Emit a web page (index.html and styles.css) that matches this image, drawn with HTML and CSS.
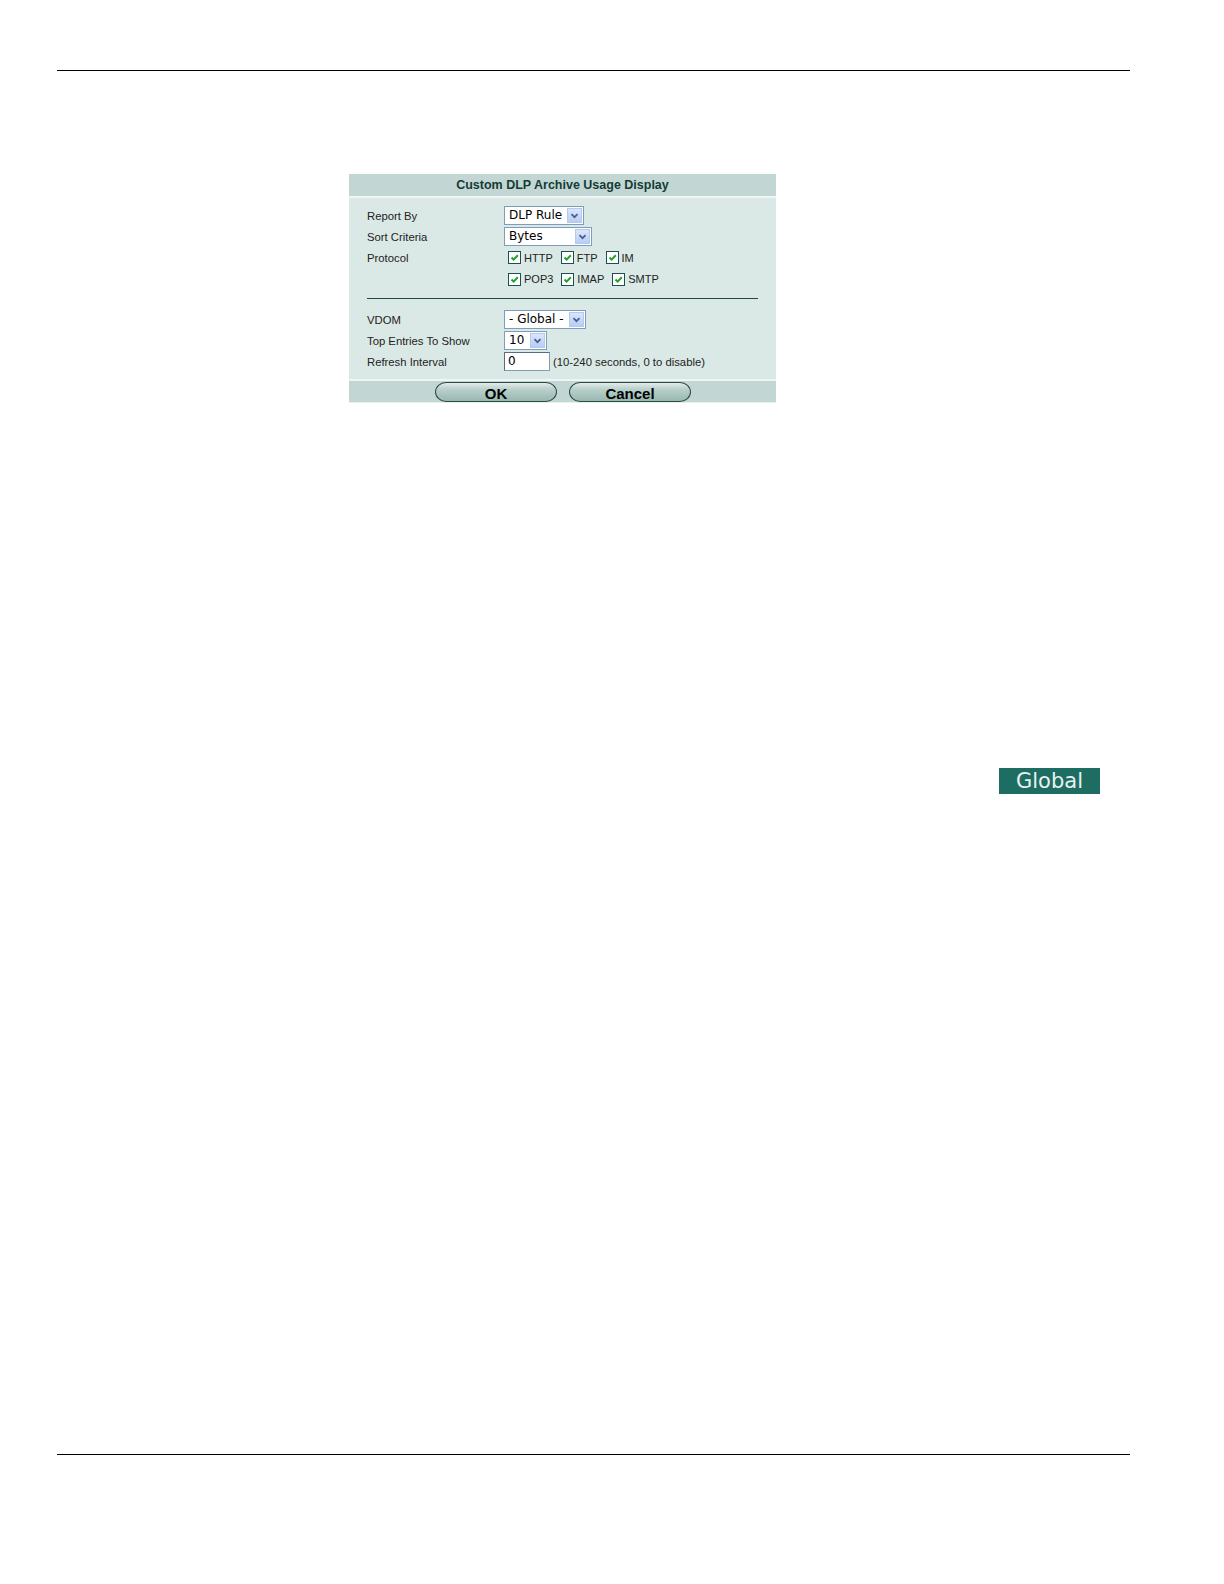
FILE: index.html
```html
<!DOCTYPE html>
<html>
<head>
<meta charset="utf-8">
<title>Custom DLP Archive Usage Display</title>
<link rel="stylesheet" href="styles.css">
</head>
<body>
<div class="page">
  <div class="rule rule-top"></div>

  <div class="dialog">
    <div class="dlg-head">Custom DLP Archive Usage Display</div>
    <div class="dlg-body">
      <div class="row">
        <span class="label">Report By</span>
        <span class="select w78"><span class="sel-text">DLP Rule</span><span class="arrow"><svg viewBox="0 0 15 15" width="15" height="15"><path d="M4 6 L7.5 9.5 L11 6" fill="none" stroke="#4a5f8a" stroke-width="2"/></svg></span></span>
      </div>
      <div class="row">
        <span class="label">Sort Criteria</span>
        <span class="select w86"><span class="sel-text">Bytes</span><span class="arrow"><svg viewBox="0 0 15 15" width="15" height="15"><path d="M4 6 L7.5 9.5 L11 6" fill="none" stroke="#4a5f8a" stroke-width="2"/></svg></span></span>
      </div>
      <div class="row">
        <span class="label">Protocol</span>
        <span class="checks">
          <span class="chk"><span class="box"><svg viewBox="0 0 11 11" width="11" height="11"><path d="M2.5 5.5 L4.6 7.6 L8.8 3.2" fill="none" stroke="#1fa12a" stroke-width="2"/></svg></span>HTTP</span>
          <span class="chk"><span class="box"><svg viewBox="0 0 11 11" width="11" height="11"><path d="M2.5 5.5 L4.6 7.6 L8.8 3.2" fill="none" stroke="#1fa12a" stroke-width="2"/></svg></span>FTP</span>
          <span class="chk"><span class="box"><svg viewBox="0 0 11 11" width="11" height="11"><path d="M2.5 5.5 L4.6 7.6 L8.8 3.2" fill="none" stroke="#1fa12a" stroke-width="2"/></svg></span>IM</span>
        </span>
      </div>
      <div class="row row-tall">
        <span class="label"></span>
        <span class="checks">
          <span class="chk"><span class="box"><svg viewBox="0 0 11 11" width="11" height="11"><path d="M2.5 5.5 L4.6 7.6 L8.8 3.2" fill="none" stroke="#1fa12a" stroke-width="2"/></svg></span>POP3</span>
          <span class="chk"><span class="box"><svg viewBox="0 0 11 11" width="11" height="11"><path d="M2.5 5.5 L4.6 7.6 L8.8 3.2" fill="none" stroke="#1fa12a" stroke-width="2"/></svg></span>IMAP</span>
          <span class="chk"><span class="box"><svg viewBox="0 0 11 11" width="11" height="11"><path d="M2.5 5.5 L4.6 7.6 L8.8 3.2" fill="none" stroke="#1fa12a" stroke-width="2"/></svg></span>SMTP</span>
        </span>
      </div>
      <div class="sep"></div>
      <div class="row">
        <span class="label">VDOM</span>
        <span class="select w80"><span class="sel-text">- Global -</span><span class="arrow"><svg viewBox="0 0 15 15" width="15" height="15"><path d="M4 6 L7.5 9.5 L11 6" fill="none" stroke="#4a5f8a" stroke-width="2"/></svg></span></span>
      </div>
      <div class="row">
        <span class="label">Top Entries To Show</span>
        <span class="select w41"><span class="sel-text">10</span><span class="arrow"><svg viewBox="0 0 15 15" width="15" height="15"><path d="M4 6 L7.5 9.5 L11 6" fill="none" stroke="#4a5f8a" stroke-width="2"/></svg></span></span>
      </div>
      <div class="row">
        <span class="label">Refresh Interval</span>
        <span class="field-wrap"><span class="input">0</span><span class="hint">(10-240 seconds, 0 to disable)</span></span>
      </div>
    </div>
    <div class="dlg-foot">
      <span class="btn">OK</span>
      <span class="btn">Cancel</span>
    </div>
  </div>

  <div class="badge">Global</div>

  <div class="rule rule-bottom"></div>
</div>
</body>
</html>
```

FILE: styles.css
```css
html, body {
  margin: 0;
  padding: 0;
  background: #ffffff;
}

.page {
  width: 1073px;
  margin-left: 57px;
  display: flex;
  flex-direction: column;
  font-family: "Liberation Sans", Arial, sans-serif;
}

.rule {
  height: 1px;
  background: #000000;
}

.rule-top {
  margin-top: 70px;
}

.rule-bottom {
  margin-top: 660px;
}

.dialog {
  width: 427px;
  margin-top: 103px;
  margin-left: 292px;
  display: flex;
  flex-direction: column;
}

.dlg-head {
  height: 22px;
  line-height: 22px;
  background: #c2d7d3;
  color: #163b37;
  font-weight: bold;
  font-size: 12.5px;
  text-align: center;
  border-bottom: 2px solid #eef5f4;
}

.dlg-body {
  background: #dbe9e6;
  padding: 7px 18px 7px 18px;
  display: flex;
  flex-direction: column;
}

.row {
  height: 21px;
  display: flex;
  align-items: center;
}

.row-tall {
  height: 22px;
}

.label {
  width: 137px;
  flex: none;
  font-size: 11.3px;
  color: #222222;
}

.select {
  height: 15px;
  border: 1px solid #7f9db9;
  background: #ffffff;
  display: flex;
  align-items: center;
  justify-content: space-between;
  padding: 1px 1px 1px 4px;
}

.w78 { width: 73px; }
.w86 { width: 81px; }
.w80 { width: 75px; }
.w41 { width: 36px; }

.sel-text {
  font-family: "DejaVu Sans", Verdana, sans-serif;
  font-size: 12px;
  color: #000000;
  line-height: 15px;
}

.arrow {
  width: 15px;
  height: 15px;
  flex: none;
  background: linear-gradient(#d9e5fb, #b8cdf5);
  box-sizing: border-box;
  border: 1px solid #b4c8f0;
  display: flex;
  align-items: center;
  justify-content: center;
}

.arrow svg {
  width: 13px;
  height: 13px;
}

.checks {
  display: flex;
  align-items: center;
  padding-left: 4px;
  gap: 8px;
}

.chk {
  display: flex;
  align-items: center;
  gap: 3px;
  font-size: 11px;
  color: #222222;
}

.box {
  width: 11px;
  height: 11px;
  border: 1px solid #1c4f4f;
  background: #ffffff;
  display: flex;
}

.sep {
  height: 1px;
  background: #1d4843;
  margin: 8px 0 10px 0;
}

.field-wrap {
  display: flex;
  align-items: center;
  gap: 3px;
}

.input {
  width: 41px;
  height: 17px;
  background: #ffffff;
  border: 1px solid #7f9db9;
  border-top-color: #5b6c7c;
  border-left-color: #5b6c7c;
  padding-left: 3px;
  font-family: "DejaVu Sans", Verdana, sans-serif;
  font-size: 12px;
  line-height: 17px;
  color: #000000;
}

.hint {
  font-size: 11.3px;
  color: #222222;
}

.dlg-foot {
  height: 21px;
  background: #c2d7d3;
  border-top: 2px solid #eef5f4;
  border-bottom: 1px solid #e8f0ef;
  display: flex;
  justify-content: center;
  align-items: flex-end;
  gap: 12px;
  padding-left: 1px;
}

.btn {
  width: 122px;
  height: 20px;
  box-sizing: border-box;
  border: 1px solid #2c4a46;
  border-radius: 11px / 10px;
  background: linear-gradient(#e2ecea 0%, #b9d0cb 35%, #98b7b0 100%);
  font-weight: bold;
  font-size: 15px;
  color: #000000;
  text-align: center;
  line-height: 22px;
  overflow: hidden;
}

.badge {
  align-self: flex-end;
  margin-right: 30px;
  margin-top: 365px;
  width: 101px;
  height: 26px;
  background: #1d6d62;
  color: #e8f1ef;
  font-family: "DejaVu Sans", Verdana, sans-serif;
  font-size: 21px;
  line-height: 26px;
  text-align: center;
}
```
